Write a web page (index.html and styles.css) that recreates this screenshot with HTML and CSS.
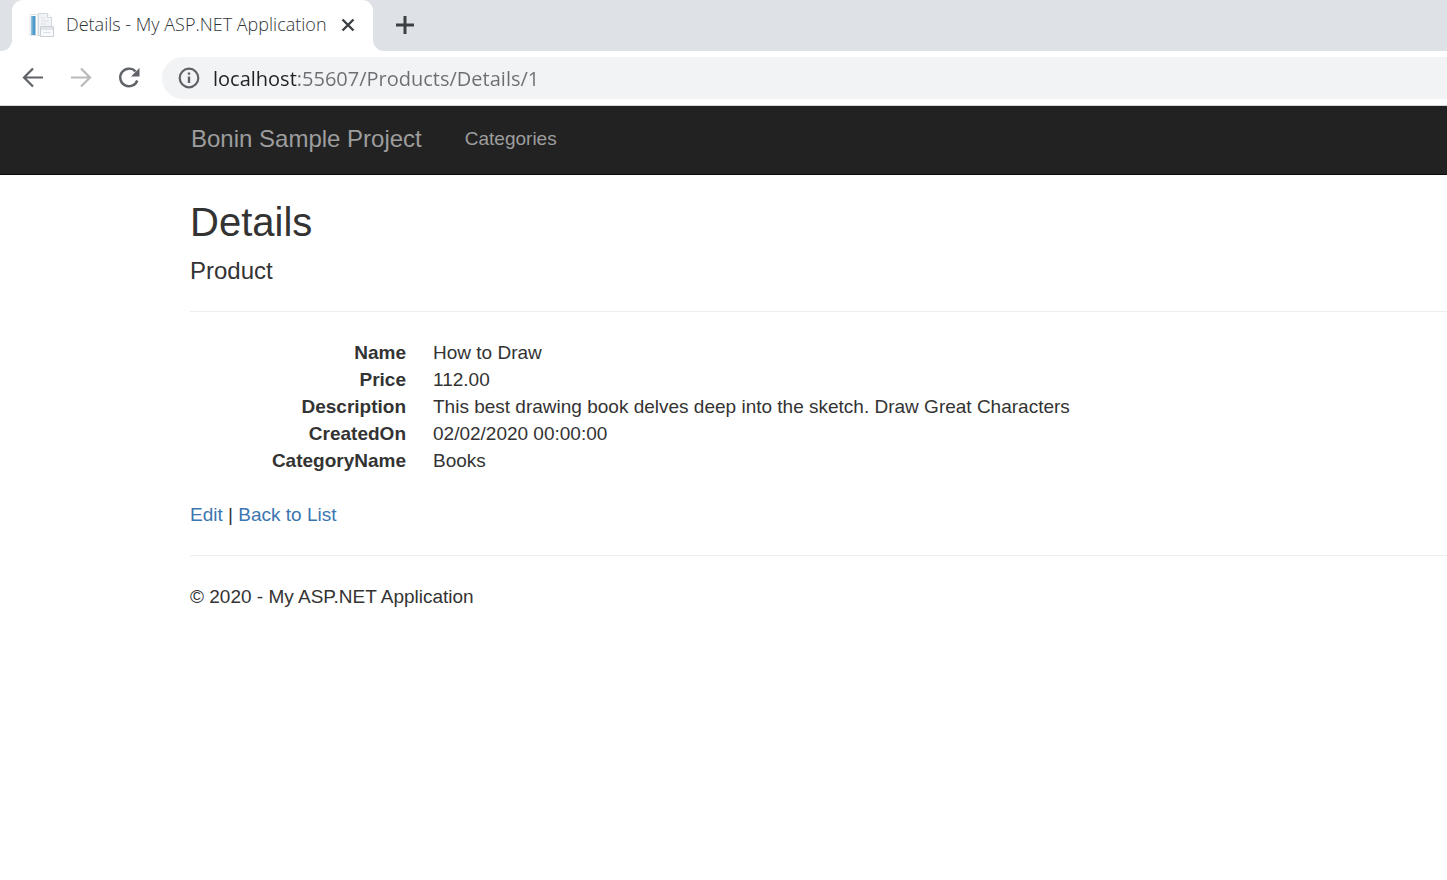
FILE: index.html
```html
<!DOCTYPE html>
<html lang="en">
<head>
<meta charset="utf-8">
<meta name="viewport" content="width=device-width, initial-scale=1">
<title>Details - My ASP.NET Application</title>
<link rel="stylesheet" href="styles.css">
</head>
<body>
<header class="browser">
  <div class="tab-strip">
    <div class="tab-edge"></div>
    <div class="tab">
      <svg class="favicon" viewBox="0 0 26 26" aria-hidden="true">
        <path d="M1 2.500h8v21H1z" fill="#fafbfb" stroke="#e3e6e8"/>
        <path d="M2 4h4.500v19H2z" fill="#4f9bcb"/>
        <path d="M2 4h1.500v19H2z" fill="#8dbfde"/>
        <path d="M9.500 1.500h9l4 4v18h-13z" fill="#f1f3f6" stroke="#d3d8dd"/>
        <path d="M18.500 1.500v4h4" fill="#fff" stroke="#d3d8dd"/>
        <path d="M12 6h4M12 9h8M12 12h5" stroke="#dce0e5"/>
        <path d="M11.500 14.500h13v10h-13z" fill="#f9fafb" stroke="#c9cfd6"/>
        <path d="M12 15h12v3H12z" fill="#e1e5ea"/>
        <path d="M14.500 20.500h7" fill="none" stroke="#d9dee4"/>
      </svg>
      <span class="tab-title">Details - My ASP.NET Application</span>
      <button class="icon-button tab-close" type="button" aria-label="Close tab">
        <svg width="14" height="14" viewBox="0 0 14 14"><path d="M1.500 1.500l11 11M12.500 1.500l-11 11" stroke="#3c4043" stroke-width="2.400"/></svg>
      </button>
    </div>
    <div class="tab-rest">
      <button class="icon-button" type="button" aria-label="New tab">
        <svg width="18" height="18" viewBox="0 0 18 18"><path d="M9 0v18M0 9h18" stroke="#3c4043" stroke-width="3"/></svg>
      </button>
    </div>
  </div>
  <div class="toolbar">
    <button class="icon-button" type="button" aria-label="Back">
      <svg width="22" height="22" viewBox="0 0 22 22"><path d="M21 10.500H2.500M11 1.500l-9 9 9 9" fill="none" stroke="#5f6368" stroke-width="2.200"/></svg>
    </button>
    <button class="icon-button" type="button" aria-label="Forward">
      <svg width="22" height="22" viewBox="0 0 22 22"><path d="M1 10.500h18.500M11 1.500l9 9-9 9" fill="none" stroke="#bababa" stroke-width="2.200"/></svg>
    </button>
    <button class="icon-button" type="button" aria-label="Reload">
      <svg width="22" height="22" viewBox="0 0 22 22"><path d="M19.300 13.500A8.800 8.800 0 1 1 17.500 4.500" fill="none" stroke="#5f6368" stroke-width="2.400"/><path d="M21.500 1v8.500H13z" fill="#5f6368"/></svg>
    </button>
    <div class="address">
      <svg width="22" height="22" viewBox="0 0 22 22" aria-hidden="true"><circle cx="11" cy="11" r="9.300" fill="none" stroke="#5f6368" stroke-width="2.200"/><path d="M11 9.500V16M11 5.500v2.300" stroke="#5f6368" stroke-width="2.400"/></svg>
      <input class="address-input" type="text" aria-label="Address" value="localhost:55607/Products/Details/1">
    </div>
  </div>
</header>
<nav class="navbar">
  <a class="brand" href="#">Bonin Sample Project</a>
  <a class="nav-link" href="#">Categories</a>
</nav>
<main class="content">
  <h2 class="title">Details</h2>
  <h4 class="subtitle">Product</h4>
  <hr class="rule">
  <dl class="details">
    <dt>Name</dt><dd>How to Draw</dd>
    <dt>Price</dt><dd>112.00</dd>
    <dt>Description</dt><dd>This best drawing book delves deep into the sketch. Draw Great Characters</dd>
    <dt>CreatedOn</dt><dd>02/02/2020 00:00:00</dd>
    <dt>CategoryName</dt><dd>Books</dd>
  </dl>
  <p class="actions"><a href="#">Edit</a> | <a href="#">Back to List</a></p>
  <hr class="rule">
  <footer><p class="copyright">© 2020 - My ASP.NET Application</p></footer>
</main>
</body>
</html>
```
FILE: styles.css
```css
* { box-sizing: border-box; }

body {
  margin: 0;
  background: #fff;
  color: #333;
  font-family: "Liberation Sans", Arial, sans-serif;
  font-size: 19px;
  line-height: 27px;
}

a { color: #3c76b0; text-decoration: none; }

.browser {
  border-bottom: 1px solid #d5d7da;
  font-family: "Open Sans", "Noto Sans", sans-serif;
}

.icon-button {
  display: flex;
  padding: 0;
  border: 0;
  background: none;
}

.tab-strip {
  display: flex;
  height: 51px;
  background: #fff;
}

.tab-edge {
  width: 12px;
  background: #dee1e6;
  border-bottom-right-radius: 11px;
}

.tab {
  display: flex;
  align-items: center;
  width: 361px;
  padding: 0 18px 2px 17px;
  background: linear-gradient(#dee1e6 50%, #fff 50%);
  position: relative;
  z-index: 0;
}

.tab::before {
  content: "";
  position: absolute;
  inset: 0;
  z-index: -1;
  background: #fff;
  border-radius: 11px 11px 0 0;
}

.favicon {
  width: 26px;
  height: 26px;
  margin-right: 11px;
}

.tab-title {
  flex: 1;
  color: #303437;
  font-size: 18px;
  font-weight: 300;
  white-space: nowrap;
}

.tab-rest {
  display: flex;
  flex: 1;
  align-items: center;
  padding: 0 0 2px 23px;
  background: #dee1e6;
  border-bottom-left-radius: 11px;
}

.toolbar {
  display: flex;
  align-items: center;
  gap: 26px;
  padding: 6px 0 6px 22px;
}

.address {
  display: flex;
  flex: 1;
  align-items: center;
  gap: 13px;
  height: 42px;
  margin-left: -4px;
  padding-left: 16px;
  background: #f1f3f4;
  border-radius: 21px 0 0 21px;
}

/* The host is drawn darker than the rest of the address. */
.address-input {
  flex: 1;
  height: 42px;
  padding: 0;
  border: 0;
  outline: 0;
  color: #6b6f73;
  background: linear-gradient(to right, #202124 84px, #6b6f73 84px);
  -webkit-background-clip: text;
  background-clip: text;
  -webkit-text-fill-color: transparent;
  font-family: inherit;
  font-size: 20px;
}

.navbar {
  display: flex;
  align-items: center;
  gap: 43px;
  height: 69px;
  padding: 0 191px 3px;
  background: #222;
  border-bottom: 1px solid #080808;
}

.navbar a { color: #9d9d9d; }

.brand { font-size: 24px; }

.content { padding: 25px 0 0 190px; }

.title {
  margin: 0 0 13px;
  font-size: 40px;
  font-weight: 400;
  line-height: 44px;
}

.subtitle {
  margin: 0;
  font-size: 24px;
  font-weight: 400;
  line-height: 27px;
}

.rule {
  margin: 27px 0;
  border: 0;
  border-top: 1px solid #eee;
}

.details {
  display: grid;
  grid-template-columns: 216px 1fr;
  column-gap: 27px;
  margin: 0 0 27px;
}

.details dt { font-weight: 700; text-align: right; }
.details dd { margin: 0; }

.actions, .copyright { margin: 0; }
```
